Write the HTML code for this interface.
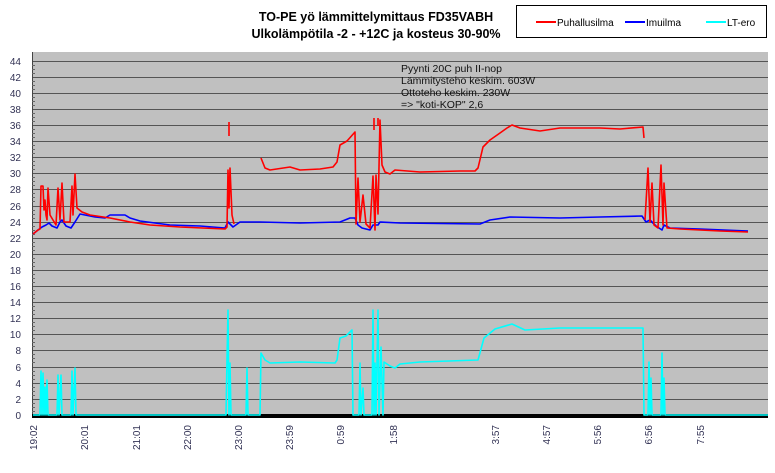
<!DOCTYPE html>
<html><head><meta charset="utf-8"><style>
html,body{margin:0;padding:0;background:#fff;width:775px;height:473px;overflow:hidden}
svg{display:block}
text{font-family:"Liberation Sans",Arial,sans-serif}
</style></head><body>
<svg width="775" height="473" viewBox="0 0 775 473" xmlns="http://www.w3.org/2000/svg">
<rect x="0" y="0" width="775" height="473" fill="#fff"/>
<text x="376" y="21" font-size="12.5" font-weight="bold" text-anchor="middle" fill="#000">TO-PE yö lämmittelymittaus  FD35VABH</text>
<text x="376" y="38" font-size="12.5" font-weight="bold" text-anchor="middle" fill="#000">Ulkolämpötila -2 - +12C ja kosteus 30-90%</text>
<rect x="516.5" y="5.5" width="250" height="32" fill="#fff" stroke="#000"/>
<line x1="536" y1="22" x2="556" y2="22" stroke="#f00" stroke-width="2"/>
<text x="557" y="26" font-size="10">Puhallusilma</text>
<line x1="625" y1="22" x2="645" y2="22" stroke="#00f" stroke-width="2"/>
<text x="646" y="26" font-size="10">Imuilma</text>
<line x1="706" y1="22" x2="726" y2="22" stroke="#0ff" stroke-width="2"/>
<text x="727" y="26" font-size="10">LT-ero</text>
<rect x="32" y="52" width="736" height="364" fill="#c0c0c0"/>
<g stroke="#555" stroke-width="1">
<line x1="32" y1="61.5" x2="768" y2="61.5"/><line x1="32" y1="77.5" x2="768" y2="77.5"/><line x1="32" y1="93.5" x2="768" y2="93.5"/><line x1="32" y1="109.5" x2="768" y2="109.5"/><line x1="32" y1="125.5" x2="768" y2="125.5"/><line x1="32" y1="141.5" x2="768" y2="141.5"/><line x1="32" y1="157.5" x2="768" y2="157.5"/><line x1="32" y1="173.5" x2="768" y2="173.5"/><line x1="32" y1="189.5" x2="768" y2="189.5"/><line x1="32" y1="206.5" x2="768" y2="206.5"/><line x1="32" y1="222.5" x2="768" y2="222.5"/><line x1="32" y1="238.5" x2="768" y2="238.5"/><line x1="32" y1="254.5" x2="768" y2="254.5"/><line x1="32" y1="270.5" x2="768" y2="270.5"/><line x1="32" y1="286.5" x2="768" y2="286.5"/><line x1="32" y1="302.5" x2="768" y2="302.5"/><line x1="32" y1="318.5" x2="768" y2="318.5"/><line x1="32" y1="334.5" x2="768" y2="334.5"/><line x1="32" y1="350.5" x2="768" y2="350.5"/><line x1="32" y1="367.5" x2="768" y2="367.5"/><line x1="32" y1="383.5" x2="768" y2="383.5"/><line x1="32" y1="399.5" x2="768" y2="399.5"/>
</g>
<line x1="32.5" y1="52" x2="32.5" y2="417" stroke="#444"/>
<g stroke="#666" stroke-width="1">
<path d="M32,65.5h3M32,69.5h3M32,73.5h3M32,81.5h3M32,85.5h3M32,89.5h3M32,97.5h3M32,101.5h3M32,105.5h3M32,113.5h3M32,117.5h3M32,121.5h3M32,129.5h3M32,133.5h3M32,137.5h3M32,145.5h3M32,149.5h3M32,153.5h3M32,161.5h3M32,165.5h3M32,169.5h3M32,177.5h3M32,181.5h3M32,185.5h3M32,193.5h3M32,197.5h3M32,201.5h3M32,210.5h3M32,214.5h3M32,218.5h3M32,226.5h3M32,230.5h3M32,234.5h3M32,242.5h3M32,246.5h3M32,250.5h3M32,258.5h3M32,262.5h3M32,266.5h3M32,274.5h3M32,278.5h3M32,282.5h3M32,290.5h3M32,294.5h3M32,298.5h3M32,306.5h3M32,310.5h3M32,314.5h3M32,322.5h3M32,326.5h3M32,330.5h3M32,338.5h3M32,342.5h3M32,346.5h3M32,354.5h3M32,358.5h3M32,362.5h3M32,371.5h3M32,375.5h3M32,379.5h3M32,387.5h3M32,391.5h3M32,395.5h3M32,403.5h3M32,407.5h3M32,411.5h3"/>
</g>
<rect x="32" y="414" width="736" height="4" fill="#000"/>
<g font-size="10" fill="#333355" text-anchor="end">
<text x="21" y="65">44</text><text x="21" y="81">42</text><text x="21" y="97">40</text><text x="21" y="113">38</text><text x="21" y="129">36</text><text x="21" y="145">34</text><text x="21" y="161">32</text><text x="21" y="177">30</text><text x="21" y="193">28</text><text x="21" y="210">26</text><text x="21" y="226">24</text><text x="21" y="242">22</text><text x="21" y="258">20</text><text x="21" y="274">18</text><text x="21" y="290">16</text><text x="21" y="306">14</text><text x="21" y="322">12</text><text x="21" y="338">10</text><text x="21" y="354">8</text><text x="21" y="371">6</text><text x="21" y="387">4</text><text x="21" y="403">2</text><text x="21" y="419">0</text>
</g>
<g font-size="10" fill="#333355" text-anchor="end">
<text transform="translate(37,425) rotate(-90)">19:02</text>
<text transform="translate(88,425) rotate(-90)">20:01</text>
<text transform="translate(140,425) rotate(-90)">21:01</text>
<text transform="translate(191,425) rotate(-90)">22:00</text>
<text transform="translate(242,425) rotate(-90)">23:00</text>
<text transform="translate(293,425) rotate(-90)">23:59</text>
<text transform="translate(344,425) rotate(-90)">0:59</text>
<text transform="translate(397,425) rotate(-90)">1:58</text>
<text transform="translate(499,425) rotate(-90)">3:57</text>
<text transform="translate(550,425) rotate(-90)">4:57</text>
<text transform="translate(601,425) rotate(-90)">5:56</text>
<text transform="translate(652,425) rotate(-90)">6:56</text>
<text transform="translate(704,425) rotate(-90)">7:55</text>
</g>
<g font-size="10.5" fill="#111">
<text x="401" y="72">Pyynti 20C puh II-nop</text>
<text x="401" y="84">Lämmitysteho keskim. 603W</text>
<text x="401" y="96">Ottoteho keskim. 230W</text>
<text x="401" y="108">=&gt; "koti-KOP" 2,6</text>
</g>
<g fill="none" stroke-width="1.6" stroke-linejoin="round">
<path stroke="#0ff" d="M33,415 L40,415 L41,371 L42,415 L43,373 L44,415 L45,387 L46,415 L47,380 L48,415 L57,415 L58,375 L59,415 L61,375 L62,415 L71,415 L72,371 L73,415 L75,368 L76,415 L226,415 L227,360 L228,310 L229,415 L230,363 L231,415 L246,415 L247,368 L248,415 L260,415 L261,353 L265,360 L270,363 L300,362 L335,363 L337,360 L340,338 L346,336 L352,330 L353,415 L359,415 L360,363 L361,415 L363,388 L364,415 L372,415 L373,310 L374,415 L375,363 L376,415 L378,310 L379,415 L381,347 L383,415 L384,362 L390,366 L395,368 L400,364 L420,362 L478,360 L484,338 L495,329 L512,324 L525,330 L560,328 L643,328 L644,415 L648,415 L649,362 L650,415 L651,378 L652,415 L661,415 L662,353 L663,415 L664,378 L665,415 L768,415"/>
<path stroke="#00f" d="M33,234 L38,230 L42,227 L46,225 L49,223 L52,226 L57,228 L60,222 L62,220 L66,226 L71,228 L75,222 L80,214 L85,215 L95,217 L105,218 L110,215 L125,215 L130,218 L140,221 L170,225 L200,226 L225,228 L228,222 L230,224 L233,227 L240,222 L260,222 L300,223 L340,222 L350,218 L355,218 L358,225 L362,228 L370,230 L373,225 L378,225 L380,222 L400,223 L480,224 L490,220 L510,217 L560,218 L600,217 L642,216 L646,222 L650,220 L656,226 L662,230 L664,225 L670,228 L700,229 L748,231"/>
<path stroke="#f00" d="M33,234 L38,230 L40,229 L41,186 L43,186 L44,210 L45,200 L46,215 L47,220 L48,188 L50,215 L56,225 L58,188 L60,220 L62,183 L64,222 L70,222 L72,186 L73,215 L75,174 L77,208 L82,212 L90,215 L110,218 L130,222 L150,225 L180,227 L225,229 L227,227 L228,170 L229,208 L230,168 L232,215 L234,224"/>
<path stroke="#f00" d="M229,122 L229,136 M374,118 L374,130 M378,118 L378,126"/>
<path stroke="#f00" d="M261,158 L265,168 L270,170 L290,167 L300,170 L320,169 L333,167 L337,162 L340,145 L347,141 L355,132 L356,224 L358,178 L360,222 L363,195 L366,224 L370,228 L373,176 L375,230 L376,175 L378,214 L380,120 L382,165 L385,172 L390,174 L395,170 L420,172 L460,171 L475,171 L478,168 L483,147 L490,140 L500,133 L507,128 L512,125 L520,128 L540,131 L560,128 L600,128 L620,129 L643,127 L644,138"/>
<path stroke="#f00" d="M645,220 L648,168 L650,222 L652,183 L654,225 L658,228 L661,165 L663,225 L664,183 L667,228 L680,229 L720,231 L748,232"/>
</g>
</svg>
</body></html>
